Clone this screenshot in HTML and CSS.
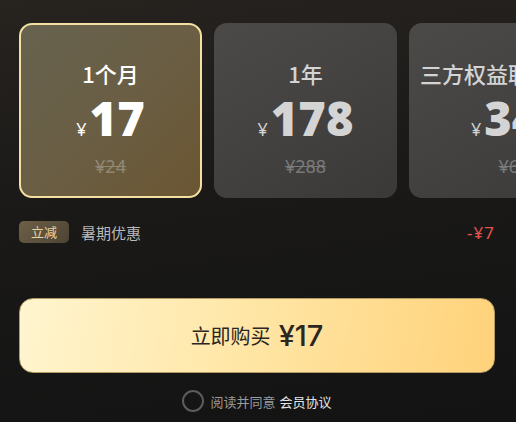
FILE: index.html
```html
<!DOCTYPE html>
<html lang="zh-CN">
<head>
<meta charset="utf-8">
<link rel="stylesheet" href="styles.css">
</head>
<body>
<div class="page">
  <div class="cards">
    <div class="card active">
      <div class="title">1个月</div>
      <div class="price"><span class="cur">¥</span><span class="num">17</span></div>
      <div class="old">¥24</div>
    </div>
    <div class="card">
      <div class="title">1年</div>
      <div class="price"><span class="cur">¥</span><span class="num">178</span></div>
      <div class="old">¥288</div>
    </div>
    <div class="card wide">
      <div class="title">三方权益联合会员卡</div>
      <div class="price"><span class="cur">¥</span><span class="num">348</span></div>
      <div class="old">¥696</div>
    </div>
  </div>
  <div class="promo">
    <span class="badge">立减</span>
    <span class="promo-text">暑期优惠</span>
    <span class="promo-amt">-¥7</span>
  </div>
  <button class="buy"><span class="buy-label">立即购买</span><span class="buy-price">¥17</span></button>
  <div class="agree">
    <span class="radio"></span>
    <span class="agree-text">阅读并同意</span>
    <span class="agree-link">会员协议</span>
  </div>
</div>
</body>
</html>
```
FILE: styles.css
```css
html, body {
  margin: 0;
  padding: 0;
  width: 516px;
  height: 422px;
  overflow: hidden;
}
body {
  background: linear-gradient(172deg, #27231f 0%, #1a1918 45%, #131313 100%);
  font-family: "Noto Sans CJK SC", "Noto Sans", sans-serif;
  color: #fff;
}
.page {
  padding: 23px 21px 0 19px;
  display: flex;
  flex-direction: column;
}
.cards {
  display: flex;
  gap: 12px;
  width: 700px;
}
.card {
  box-sizing: border-box;
  flex: 0 0 183px;
  height: 175px;
  border-radius: 13px;
  border: 2px solid transparent;
  background: linear-gradient(150deg, #4b4a49 0%, #434241 50%, #3a3938 100%);
  background-origin: border-box;
  display: flex;
  flex-direction: column;
  align-items: center;
  padding-top: 34px;
  color: #d4d4d4;
}
.card.wide {
  flex-basis: 220px;
}
.card.active {
  border-color: #f4e0a2;
  background: linear-gradient(135deg, #66624f 0%, #6a5e44 50%, #6b5632 100%);
  background-origin: border-box;
  color: #ffffff;
}
.title {
  font-size: 22px;
  line-height: 28px;
  font-weight: 500;
  white-space: nowrap;
}
.price {
  margin-top: 6px;
  height: 50px;
  line-height: 50px;
  white-space: nowrap;
  font-family: "Open Sans", "Noto Sans", sans-serif;
}
.cur {
  font-size: 18px;
  margin-right: 3px;
}
.num {
  font-size: 47px;
  font-weight: 800;
}
.old {
  margin-top: 12px;
  font-family: "Noto Sans", sans-serif;
  font-size: 18px;
  line-height: 22px;
  text-decoration: line-through;
  color: #7a7a7a;
}
.card.active .old {
  color: #918873;
}
.promo {
  margin-top: 23px;
  display: flex;
  align-items: center;
  height: 22px;
}
.badge {
  width: 50px;
  height: 22px;
  border-radius: 5px;
  background: linear-gradient(135deg, #6d6047 0%, #4d4434 100%);
  color: #e9d4a4;
  font-size: 13px;
  line-height: 22px;
  text-align: center;
}
.promo-text {
  margin-left: 12px;
  font-size: 15px;
  color: #b9b9b9;
}
.promo-amt {
  margin-left: auto;
  font-family: "Noto Sans", sans-serif;
  font-size: 17px;
  letter-spacing: 1px;
  color: #e4534b;
}
.buy {
  margin-top: 55px;
  height: 75px;
  width: 100%;
  border: 1px solid #b49a63;
  border-radius: 14px;
  background: linear-gradient(100deg, #fff5cf 0%, #ffe7a8 45%, #ffd27a 100%);
  display: flex;
  align-items: center;
  justify-content: center;
  gap: 8px;
  color: #2b2622;
  padding: 0;
  font-family: "Noto Sans CJK SC", "Noto Sans", sans-serif;
}
.buy-label {
  font-size: 20px;
}
.buy-price {
  font-family: "Inter", "Noto Sans", sans-serif;
  font-size: 29px;
  font-weight: 500;
}
.agree {
  margin-top: 17px;
  display: flex;
  align-items: center;
  justify-content: center;
  font-size: 13px;
}
.radio {
  box-sizing: border-box;
  width: 22px;
  height: 22px;
  border-radius: 50%;
  border: 2.5px solid #5c5c5c;
  margin-right: 6px;
}
.agree-text {
  color: #9a9a9a;
}
.agree-link {
  margin-left: 4px;
  color: #e6e6e6;
}
```
